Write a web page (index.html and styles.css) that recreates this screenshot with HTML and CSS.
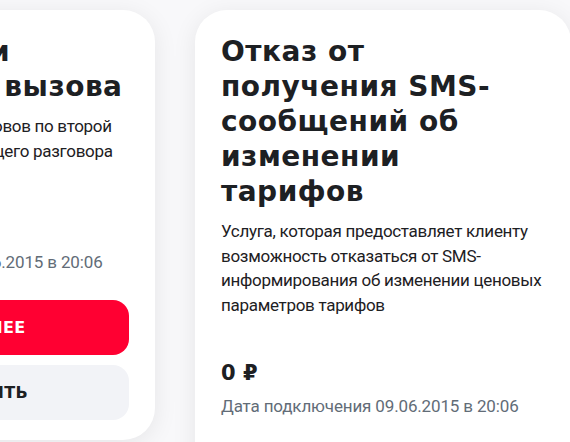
FILE: index.html
```html
<!DOCTYPE html>
<html lang="ru">
<head>
<meta charset="utf-8">
<title>Услуги</title>
<link rel="stylesheet" href="styles.css">
</head>
<body>
<div class="row">
  <article class="card">
    <h3 class="title">Ожидание и удержание вызова</h3>
    <p class="desc desc-short">Приём и удержание вызовов по второй линии при ведении текущего разговора</p>
    <div class="price">0 ₽</div>
    <div class="date">Дата подключения 09.06.2015 в 20:06</div>
    <div class="actions">
      <button class="btn btn-primary">Подробнее</button>
      <button class="btn btn-secondary">Отключить</button>
    </div>
  </article>
  <article class="card">
    <h3 class="title">Отказ от получения SMS-сообщений об изменении тарифов</h3>
    <p class="desc">Услуга, которая предоставляет клиенту возможность отказаться от SMS-информирования об изменении ценовых параметров тарифов</p>
    <div class="price">0 ₽</div>
    <div class="date">Дата подключения 09.06.2015 в 20:06</div>
    <div class="actions">
      <button class="btn btn-primary">Подробнее</button>
      <button class="btn btn-secondary">Отключить</button>
    </div>
  </article>
</div>
</body>
</html>
```
FILE: styles.css
```css
html, body {
  margin: 0;
  padding: 0;
}
body {
  background: #f8f8fa;
  font-family: Roboto, "Liberation Sans", sans-serif;
  color: #1d2023;
  overflow: hidden;
}
.row {
  display: flex;
  align-items: flex-start;
  gap: 40px;
  padding-top: 10px;
  margin-left: -221px;
}
.card {
  flex: 0 0 376px;
  box-sizing: border-box;
  width: 376px;
  background: #ffffff;
  border-radius: 32px;
  padding: 24px 26px 20px;
  box-shadow: 0 4px 24px rgba(0, 0, 0, 0.08);
  display: flex;
  flex-direction: column;
}
.title {
  margin: 0;
  font-family: "DejaVu Sans", sans-serif;
  font-weight: 700;
  font-size: 28px;
  line-height: 35px;
  letter-spacing: 0.5px;
  color: #1d2023;
}
.desc {
  margin: 10px 0 42px;
  font-size: 17px;
  line-height: 24.5px;
  letter-spacing: -0.3px;
}
.desc-short {
  margin-bottom: 52px;
}
.price {
  font-family: "DejaVu Sans", sans-serif;
  font-weight: 700;
  font-size: 21px;
  line-height: 28px;
}
.date {
  margin-top: 7px;
  font-size: 17px;
  line-height: 24px;
  letter-spacing: -0.15px;
  color: #626c77;
}
.actions {
  margin-top: 26px;
  display: flex;
  flex-direction: column;
  gap: 10px;
}
.btn {
  height: 55px;
  border: 0;
  border-radius: 16px;
  font-family: "DejaVu Sans", sans-serif;
  font-weight: 700;
  font-size: 16px;
  letter-spacing: 0.3px;
  text-transform: uppercase;
  cursor: pointer;
}
.btn-primary {
  background: #ff0032;
  color: #ffffff;
}
.btn-secondary {
  background: #f2f3f7;
  color: #1d2023;
}
```
